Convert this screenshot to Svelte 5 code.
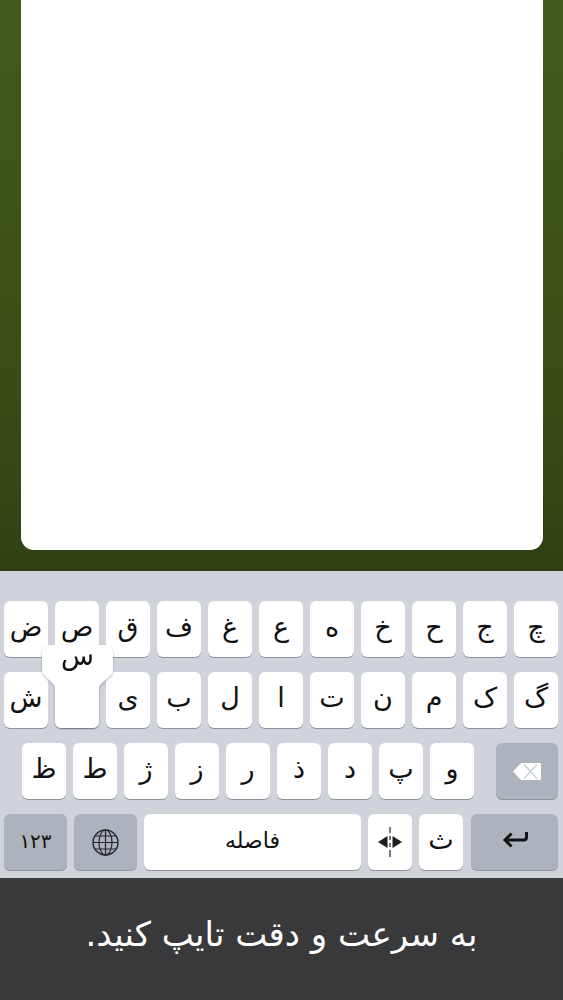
<script>
	const row1 = ['ض', 'ص', 'ق', 'ف', 'غ', 'ع', 'ه', 'خ', 'ح', 'ج', 'چ'];
	const row2 = ['ش', '', 'ی', 'ب', 'ل', 'ا', 'ت', 'ن', 'م', 'ک', 'گ'];
	const row3 = ['ظ', 'ط', 'ژ', 'ز', 'ر', 'ذ', 'د', 'پ', 'و'];
</script>

<div class="screen">
	<div class="stage">
		<div class="card"></div>
	</div>

	<div class="keyboard">
		<div class="row">
			{#each row1 as k}
				<div class="key">{k}</div>
			{/each}
		</div>
		<div class="row">
			{#each row2 as k}
				<div class="key">{k}</div>
			{/each}
		</div>
		<div class="row row3">
			<div class="letters">
				{#each row3 as k}
					<div class="key">{k}</div>
				{/each}
			</div>
			<div class="key fn del">
				<svg width="28" height="17" viewBox="0 0 28 17">
					<path d="M8 0h19a1 1 0 0 1 1 1v15a1 1 0 0 1-1 1H8L0 8.500z" fill="#fff" />
					<path d="M11 1.500l13 14M24 1.500l-13 14" stroke="#c6cbd2" stroke-width="1.200" fill="none" />
				</svg>
			</div>
		</div>
		<div class="row">
			<div class="key fn num">۱۲۳</div>
			<div class="key fn globe">
				<svg width="27" height="27" viewBox="0 0 27 27" fill="none" stroke="#23272c" stroke-width="1.200">
					<circle cx="13.500" cy="13.500" r="12.500" stroke-width="1.400" />
					<ellipse cx="13.500" cy="13.500" rx="6.500" ry="12.500" />
					<path d="M13.500 1v25M1 13.500h25M3 7h21M3 20h21" />
				</svg>
			</div>
			<div class="key space">فاصله</div>
			<div class="key cursor">
				<svg width="24" height="30" viewBox="0 0 24 30" fill="#1c1c1e">
					<path d="M9.500 9v12L0 15zM14.500 9v12L24 15z" />
					<path d="M12 0v6M12 9v4M12 16v4M12 23v7" stroke="#6a6d71" stroke-width="1.800" fill="none" />
				</svg>
			</div>
			<div class="key">ث</div>
			<div class="key fn ret">
				<svg width="26" height="16" viewBox="0 0 26 16" fill="none" stroke="#101214" stroke-width="3">
					<path d="M24.500 0v5q0 3-3 3H3" />
					<path d="M9.500 1.500 3 8l6.500 6.500" />
				</svg>
			</div>
		</div>

		<div class="popup">
			<svg width="73" height="86" viewBox="0 0 73 86">
				<path
					d="M8 1h57a7 7 0 0 1 7 7v18a7 7 0 0 1-2 5l-10 9a6 6 0 0 0-2 4v34a6 6 0 0 1-6 6H20a6 6 0 0 1-6-6V44a6 6 0 0 0-2-4l-9-9a7 7 0 0 1-2-5V8a7 7 0 0 1 7-7z"
					fill="#fff"
				/>
			</svg>
			<span>س</span>
		</div>
	</div>

	<div class="hint">به سرعت و دقت تایپ کنید.</div>
</div>

<style>
	:global(body) {
		margin: 0;
		background: #39383a;
	}

	.screen {
		width: 563px;
		height: 1000px;
		display: flex;
		flex-direction: column;
		overflow: hidden;
		font-family: 'DejaVu Sans', 'Noto Sans', sans-serif;
	}

	.stage {
		height: 571px;
		padding: 0 20px 21px 21px;
		box-sizing: border-box;
		background: linear-gradient(to bottom, #435a1c, #3d5116 50%, #354815 85%, #2f3f12);
	}

	.card {
		height: 100%;
		background: #fff;
		border-radius: 0 0 13px 13px;
	}

	.keyboard {
		position: relative;
		height: 307px;
		box-sizing: border-box;
		padding: 30px 5px 0 4px;
		background: #d0d3da;
		display: flex;
		flex-direction: column;
		gap: 15px;
	}

	.row {
		display: flex;
		gap: 7px;
		height: 56px;
	}

	.row3 {
		justify-content: space-between;
		padding-left: 18px;
	}

	.letters {
		display: flex;
		gap: 7px;
	}

	.key {
		flex: 0 0 44px;
		height: 56px;
		box-sizing: border-box;
		padding-bottom: 6px;
		display: flex;
		align-items: center;
		justify-content: center;
		background: #fff;
		border-radius: 6px;
		box-shadow: 0 1px 0 #8e9299;
		color: #111;
		font-size: 27px;
		line-height: 1;
	}

	.fn {
		background: #adb3bc;
	}

	.del,
	.globe,
	.cursor {
		padding-bottom: 0;
	}

	.del {
		flex-basis: 62px;
	}

	.num {
		flex-basis: 63px;
		font-size: 20px;
		padding-bottom: 2px;
	}

	.globe {
		flex-basis: 63px;
	}

	.space {
		flex-basis: 217px;
		font-size: 22px;
		padding-bottom: 2px;
	}

	.ret {
		flex-basis: 87px;
		margin-left: 1px;
		padding-bottom: 4px;
	}

	.popup {
		position: absolute;
		left: 41px;
		top: 73px;
		width: 73px;
		height: 86px;
		filter: drop-shadow(0 1px 1px rgba(90, 95, 105, 0.45));
	}

	.popup svg {
		display: block;
	}

	.popup span {
		position: absolute;
		left: 0;
		right: 0;
		top: -2px;
		text-align: center;
		font-size: 27px;
		line-height: 28px;
		color: #111;
	}

	.hint {
		flex: 1;
		display: flex;
		align-items: center;
		justify-content: center;
		background: #39383a;
		color: #fff;
		font-size: 34px;
		direction: rtl;
		padding-bottom: 10px;
	}
</style>
